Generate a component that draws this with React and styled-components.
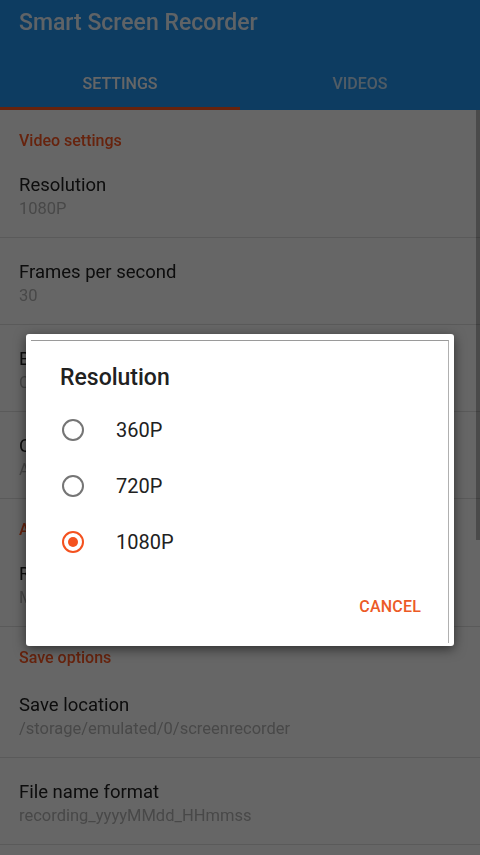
import React from 'react';
import styled, { createGlobalStyle } from 'styled-components';

/*
 * styled components
 */

const GlobalStyle = createGlobalStyle`
  html, body {
    margin: 0;
    padding: 0;
    background: #ffffff;
    font-family: Roboto, "Noto Sans", "Liberation Sans", sans-serif;
  }
  * {
    box-sizing: border-box;
  }
`;

const Screen = styled.div`
  position: relative;
  width: 480px;
  height: 855px;
  overflow: hidden;
  background: #ffffff;
`;

const AppContent = styled.div`
  display: flex;
  flex-direction: column;
  filter: blur(0.6px);
`;

const AppBar = styled.header`
  background: #2196f3;
  display: flex;
  flex-direction: column;
`;

const Toolbar = styled.div`
  height: 44px;
  display: flex;
  align-items: center;
  padding: 0 19px;
  color: rgba(255, 255, 255, 0.92);
  font-size: 23px;
  font-weight: 500;
`;

const TabRow = styled.div`
  display: flex;
  height: 66px;
`;

const Tab = styled.div`
  flex: 1;
  display: flex;
  align-items: center;
  justify-content: center;
  padding-top: 15px;
  font-size: 16px;
  font-weight: 500;
  color: ${(props) => (props.active ? '#ffffff' : 'rgba(255, 255, 255, 0.75)')};
  border-bottom: 3px solid ${(props) => (props.active ? '#ff5722' : 'transparent')};
`;

const SectionHeader = styled.div`
  height: ${(props) => props.height || 41}px;
  padding: 22px 19px 0;
  font-size: 16px;
  line-height: 18px;
  font-weight: 500;
  color: #ff5722;
`;

const PrefItem = styled.div`
  height: 87px;
  padding: 23px 19px 0;
  border-bottom: 1px solid #e0e0e0;
`;

const PrefTitle = styled.div`
  font-size: 18.5px;
  line-height: 22px;
  color: #212121;
`;

const PrefSummary = styled.div`
  margin-top: 3px;
  font-size: 16.5px;
  line-height: 20px;
  color: #b4b4b4;
`;

const ScrollThumb = styled.div`
  position: absolute;
  top: 110px;
  right: 0;
  width: 4px;
  height: 430px;
  background: rgba(0, 0, 0, 0.28);
`;

const Backdrop = styled.div`
  position: absolute;
  inset: 0;
  background: rgba(0, 0, 0, 0.6);
  display: flex;
  justify-content: center;
  align-items: flex-start;
  padding-top: 334px;
`;

const Dialog = styled.div`
  position: relative;
  width: 428px;
  height: 312px;
  background: #ffffff;
  border-radius: 3px;
  box-shadow: 0 3px 12px rgba(0, 0, 0, 0.55);
  padding: 30px 25px 22px 0;
  display: flex;
  flex-direction: column;

  &::before {
    content: '';
    position: absolute;
    top: 6px;
    left: 5px;
    right: 5px;
    bottom: 3px;
    border-top: 1px solid #9a9a9a;
    border-right: 1px solid #b0b0b0;
    pointer-events: none;
  }
`;

const DialogTitle = styled.div`
  padding-left: 34px;
  font-size: 23px;
  line-height: 28px;
  font-weight: 500;
  color: #212121;
  margin-bottom: 10px;
`;

const OptionList = styled.div`
  display: flex;
  flex-direction: column;
`;

const OptionRow = styled.label`
  height: 56px;
  display: flex;
  align-items: center;
  gap: 32px;
  padding-left: 36px;
  font-size: 20px;
  color: #212121;
`;

const RadioCircle = styled.span`
  width: 22px;
  height: 22px;
  border-radius: 50%;
  border: 2px solid ${(props) => (props.checked ? '#f4511e' : '#757575')};
  display: flex;
  align-items: center;
  justify-content: center;

  &::after {
    content: '';
    width: 10px;
    height: 10px;
    border-radius: 50%;
    background: ${(props) => (props.checked ? '#f4511e' : 'transparent')};
  }
`;

const ButtonBar = styled.div`
  margin-top: 18px;
  display: flex;
  justify-content: flex-end;
`;

const TextButton = styled.button`
  height: 36px;
  padding: 0 8px;
  border: none;
  background: transparent;
  font-family: inherit;
  font-size: 16px;
  font-weight: 500;
  letter-spacing: 0.2px;
  color: #ec5a26;
`;

/*
 * data
 */

const SECTIONS = [
  {
    header: 'Video settings',
    items: [
      { title: 'Resolution', summary: '1080P' },
      { title: 'Frames per second', summary: '30' },
      { title: 'Bit rate', summary: 'Custom' },
      { title: 'Orientation', summary: 'Auto' }
    ]
  },
  {
    header: 'Audio settings',
    items: [
      { title: 'Record audio', summary: 'Microphone' }
    ]
  },
  {
    header: 'Save options',
    headerHeight: 44,
    items: [
      { title: 'Save location', summary: '/storage/emulated/0/screenrecorder' },
      { title: 'File name format', summary: 'recording_yyyyMMdd_HHmmss' }
    ]
  }
];

const RESOLUTIONS = ['360P', '720P', '1080P'];

export default function App() {

  const selected = '1080P';

  return (
    <Screen>
      <GlobalStyle />
      <AppContent>
        <AppBar>
          <Toolbar>Smart Screen Recorder</Toolbar>
          <TabRow>
            <Tab active>SETTINGS</Tab>
            <Tab>VIDEOS</Tab>
          </TabRow>
        </AppBar>
        {
          SECTIONS.map((section) => (
            <React.Fragment key={section.header}>
              <SectionHeader height={section.headerHeight}>{section.header}</SectionHeader>
              {
                section.items.map((item) => (
                  <PrefItem key={item.title}>
                    <PrefTitle>{item.title}</PrefTitle>
                    <PrefSummary>{item.summary}</PrefSummary>
                  </PrefItem>
                ))
              }
            </React.Fragment>
          ))
        }
      </AppContent>
      <ScrollThumb />
      <Backdrop>
        <Dialog>
          <DialogTitle>Resolution</DialogTitle>
          <OptionList>
            {
              RESOLUTIONS.map((res) => (
                <OptionRow key={res}>
                  <RadioCircle checked={res === selected} />
                  {res}
                </OptionRow>
              ))
            }
          </OptionList>
          <ButtonBar>
            <TextButton>CANCEL</TextButton>
          </ButtonBar>
        </Dialog>
      </Backdrop>
    </Screen>
  );
}
